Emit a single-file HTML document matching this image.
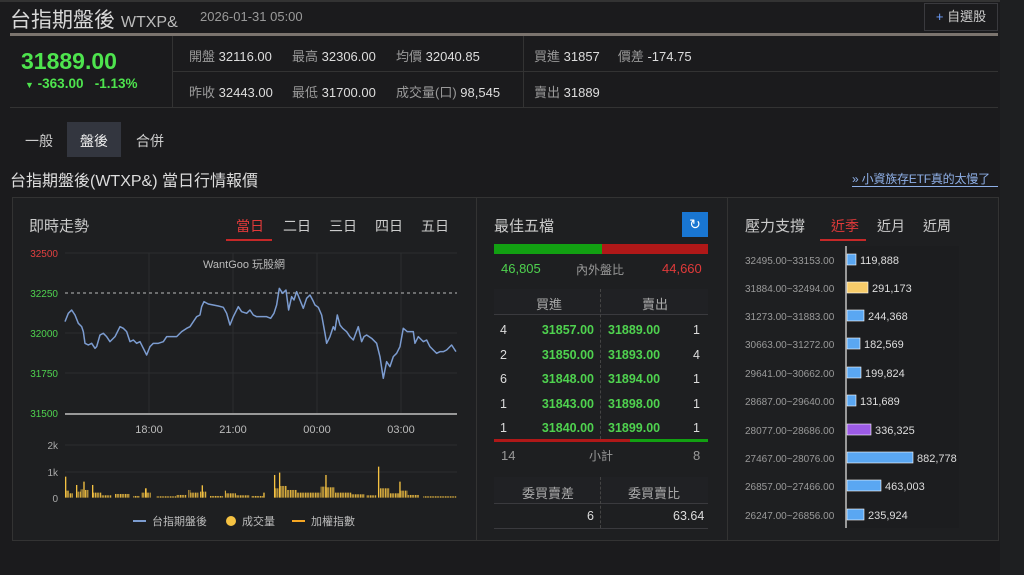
<!DOCTYPE html>
<html><head><meta charset="utf-8"><style>
*{margin:0;padding:0;box-sizing:border-box}
body{width:1024px;height:575px;background:#1b1b1d;font-family:"Liberation Sans","Noto Sans CJK TC",sans-serif;color:#ddd;position:relative;overflow:hidden}
.a{position:absolute;white-space:nowrap}
.lbl{color:#9a9a9a}
.g{color:#4fd24f}
.r{color:#e03a3a}
</style></head><body>
<div class="a" style="left:0;top:0;width:1024px;height:2px;background:#333"></div>
<div class="a" style="left:10px;top:4px;font-size:21px;color:#d8d8d8">台指期盤後 <span style="font-size:16px;color:#bbb">WTXP&amp;</span></div>
<div class="a" style="left:200px;top:9px;font-size:13px;color:#9a9a9a">2026-01-31 05:00</div>
<div class="a" style="left:924px;top:3px;width:74px;height:28px;border:1px solid #3a3a3e;font-size:13px;line-height:26px;text-align:center;color:#ccc"><span style="color:#6fa0ff">+</span> 自選股</div>
<div class="a" style="left:10px;top:33px;width:988px;height:3px;background:#7b746e"></div>

<div class="a" style="left:172px;top:36px;width:1px;height:71px;background:#333"></div>
<div class="a" style="left:523px;top:36px;width:1px;height:71px;background:#333"></div>
<div class="a" style="left:172px;top:71px;width:826px;height:1px;background:#333"></div>
<div class="a" style="left:10px;top:107px;width:988px;height:1px;background:#333"></div>
<div class="a g" style="left:21px;top:48px;font-size:23px;font-weight:bold;color:#4ee44e">31889.00</div>
<div class="a" style="left:25px;top:76px;font-size:13.5px;font-weight:bold;color:#4ee44e"><span style="font-size:9px">▼</span> -363.00 &nbsp;&nbsp;-1.13%</div>
<div class="a" style="left:189px;top:46px;font-size:13px"><span class="lbl">開盤</span> 32116.00</div>
<div class="a" style="left:292px;top:46px;font-size:13px"><span class="lbl">最高</span> 32306.00</div>
<div class="a" style="left:396px;top:46px;font-size:13px"><span class="lbl">均價</span> 32040.85</div>
<div class="a" style="left:189px;top:82px;font-size:13px"><span class="lbl">昨收</span> 32443.00</div>
<div class="a" style="left:292px;top:82px;font-size:13px"><span class="lbl">最低</span> 31700.00</div>
<div class="a" style="left:396px;top:82px;font-size:13px"><span class="lbl">成交量(口)</span> 98,545</div>
<div class="a" style="left:534px;top:46px;font-size:13px"><span class="lbl">買進</span> 31857 &nbsp;&nbsp;&nbsp; <span class="lbl">價差</span> -174.75</div>
<div class="a" style="left:534px;top:82px;font-size:13px"><span class="lbl">賣出</span> 31889</div>

<div class="a" style="left:67px;top:122px;width:54px;height:35px;background:#33363f"></div>
<div class="a" style="left:25px;top:131px;font-size:14px;color:#ccc">一般</div>
<div class="a" style="left:80px;top:131px;font-size:14px;color:#eee">盤後</div>
<div class="a" style="left:136px;top:131px;font-size:14px;color:#ccc">合併</div>
<div class="a" style="left:10px;top:167px;font-size:16px;color:#ddd">台指期盤後(WTXP&amp;) 當日行情報價</div>
<div class="a" style="left:852px;top:170px;font-size:12px;color:#8fb0e8;letter-spacing:-0.2px">» 小資族存ETF真的太慢了</div>
<div class="a" style="left:852px;top:186px;width:146px;height:1px;background:#8fb0e8"></div>

<div class="a" style="left:12px;top:197px;width:987px;height:344px;border:1px solid #333;background:#1e1f21"></div>
<div class="a" style="left:476px;top:198px;width:1px;height:342px;background:#333"></div>
<div class="a" style="left:727px;top:198px;width:1px;height:342px;background:#333"></div>
<div class="a" style="left:1000px;top:0;width:24px;height:575px;background:#1e1f21"></div>

<!-- chart panel -->
<div class="a" style="left:29px;top:215px;font-size:15px;color:#ccc">即時走勢</div>
<div class="a r" style="left:236px;top:216px;font-size:14px">當日</div>
<div class="a" style="left:226px;top:239px;width:46px;height:2px;background:#c62828"></div>
<div class="a" style="left:283px;top:216px;font-size:14px;color:#ccc">二日</div>
<div class="a" style="left:329px;top:216px;font-size:14px;color:#ccc">三日</div>
<div class="a" style="left:375px;top:216px;font-size:14px;color:#ccc">四日</div>
<div class="a" style="left:421px;top:216px;font-size:14px;color:#ccc">五日</div>
<svg class="a" style="left:0;top:0" width="476" height="575">
<defs><pattern id="st" patternUnits="userSpaceOnUse" width="5" height="10"><rect x="0" y="0" width="3" height="10" fill="#f5c242"/></pattern></defs>
<g stroke="#2c2d30" stroke-width="1">
<line x1="65" y1="253" x2="457" y2="253"/><line x1="65" y1="333" x2="457" y2="333"/><line x1="65" y1="373" x2="457" y2="373"/>
<line x1="149" y1="253" x2="149" y2="413"/><line x1="233" y1="253" x2="233" y2="413"/><line x1="317" y1="253" x2="317" y2="413"/><line x1="401" y1="253" x2="401" y2="413"/>
<line x1="65" y1="445" x2="457" y2="445"/><line x1="65" y1="472" x2="457" y2="472"/>
</g>
<line x1="65" y1="293" x2="457" y2="293" stroke="#bbb" stroke-dasharray="3,3"/>
<line x1="65" y1="414" x2="457" y2="414" stroke="#999" stroke-width="2"/>
<g font-size="10" font-family="Liberation Sans,sans-serif" text-anchor="end">
<text x="58" y="257" fill="#e04040">32500</text>
<text x="58" y="297" fill="#4fd24f">32250</text>
<text x="58" y="337" fill="#4fd24f">32000</text>
<text x="58" y="377" fill="#4fd24f">31750</text>
<text x="58" y="417" fill="#4fd24f">31500</text>
<text x="58" y="449" fill="#aaa">2k</text>
<text x="58" y="476" fill="#aaa">1k</text>
<text x="58" y="502" fill="#aaa">0</text>
</g>
<g font-size="11" fill="#bbb" text-anchor="middle" font-family="Liberation Sans,sans-serif">
<text x="149" y="433">18:00</text><text x="233" y="433">21:00</text><text x="317" y="433">00:00</text><text x="401" y="433">03:00</text>
</g>
<text x="244" y="268" font-size="11" fill="#bbb" text-anchor="middle" font-family="Liberation Sans,Noto Sans CJK TC,sans-serif">WantGoo 玩股網</text>
<g transform="translate(0,200) scale(0.3333)">
<polyline fill="none" stroke="#7c9cd0" stroke-width="4.5" stroke-linejoin="round" points="195,365 205,340 215,330 225,345 235,370 245,380 250,395 255,430 265,435 275,430 285,445 290,440 300,405 310,400 320,410 330,425 345,410 360,380 370,385 380,395 390,425 400,420 410,430 420,425 430,445 440,465 450,440 460,430 475,430 490,425 500,410 515,410 530,410 545,395 560,385 570,380 580,365 590,350 600,345 605,320 612,305 625,312 640,315 655,318 670,322 680,340 690,375 700,350 715,320 725,335 740,340 750,330 760,345 770,350 785,350 800,350 812,355 822,340 830,315 838,265 848,280 858,270 866,330 875,290 882,300 890,275 900,300 910,325 920,295 930,285 938,300 945,315 955,322 965,345 975,400 980,430 990,410 1000,380 1005,390 1012,345 1020,375 1028,385 1040,395 1050,410 1060,420 1075,380 1085,425 1092,410 1100,405 1115,415 1130,430 1140,470 1150,535 1160,485 1170,500 1180,470 1190,460 1200,440 1210,385 1222,395 1240,395 1245,430 1255,410 1270,425 1280,420 1290,440 1300,450 1310,460 1320,455 1330,455 1340,450 1355,435 1368,455"/>
<g fill="url(#st)">
<rect x="195" y="830" width="4" height="63" fill="#f5c242"/><rect x="199" y="872" width="8" height="21"/><rect x="207" y="880" width="12" height="13"/>
<rect x="228" y="855" width="4" height="38" fill="#f5c242"/><rect x="232" y="875" width="10" height="18"/><rect x="242" y="868" width="6" height="25"/><rect x="250" y="845" width="4" height="48" fill="#f5c242"/><rect x="254" y="870" width="12" height="23"/><rect x="276" y="855" width="4" height="38" fill="#f5c242"/><rect x="280" y="878" width="25" height="15"/><rect x="305" y="886" width="30" height="7"/>
<rect x="345" y="882" width="45" height="11"/><rect x="400" y="888" width="20" height="5"/><rect x="425" y="878" width="10" height="15"/><rect x="435" y="865" width="5" height="28" fill="#f5c242"/><rect x="440" y="878" width="12" height="15"/>
<rect x="470" y="889" width="60" height="4"/><rect x="530" y="885" width="30" height="8"/><rect x="565" y="870" width="6" height="23"/><rect x="571" y="878" width="25" height="15"/><rect x="605" y="856" width="4" height="37" fill="#f5c242"/><rect x="600" y="875" width="20" height="18"/>
<rect x="630" y="888" width="40" height="5"/><rect x="673" y="872" width="5" height="21"/><rect x="678" y="880" width="30" height="13"/><rect x="708" y="886" width="40" height="7"/><rect x="755" y="888" width="35" height="5"/><rect x="790" y="878" width="4" height="15" fill="#f5c242"/>
<rect x="822" y="825" width="4" height="68" fill="#f5c242"/><rect x="826" y="865" width="10" height="28"/><rect x="837" y="818" width="4" height="75" fill="#f5c242"/><rect x="841" y="858" width="20" height="35"/><rect x="861" y="870" width="30" height="23"/><rect x="891" y="878" width="70" height="15"/>
<rect x="962" y="860" width="14" height="33"/><rect x="976" y="825" width="4" height="68" fill="#f5c242"/><rect x="980" y="862" width="25" height="31"/><rect x="1005" y="878" width="50" height="15"/><rect x="1055" y="883" width="40" height="10"/>
<rect x="1100" y="886" width="30" height="7"/><rect x="1134" y="800" width="4" height="93" fill="#f5c242"/><rect x="1138" y="865" width="30" height="28"/><rect x="1168" y="880" width="30" height="13"/><rect x="1198" y="845" width="4" height="48" fill="#f5c242"/><rect x="1202" y="872" width="20" height="21"/><rect x="1222" y="885" width="35" height="8"/><rect x="1270" y="889" width="100" height="4"/>
</g>
</g>
<line x1="133" y1="521" x2="146" y2="521" stroke="#7c9cd0" stroke-width="2"/>
<circle cx="231" cy="521" r="5" fill="#f5c242"/>
<line x1="292" y1="521" x2="305" y2="521" stroke="#f5a623" stroke-width="2"/>
<g font-size="11" fill="#bbb" font-family="Liberation Sans,Noto Sans CJK TC,sans-serif">
<text x="152" y="525">台指期盤後</text><text x="242" y="525">成交量</text><text x="311" y="525">加權指數</text>
</g>
</svg>

<!-- best five -->
<div class="a" style="left:494px;top:215px;font-size:15px;color:#ccc">最佳五檔</div>
<div class="a" style="left:682px;top:212px;width:26px;height:25px;background:#1976d2;color:#fff;font-size:14px;line-height:25px;text-align:center">↻</div>
<div class="a" style="left:494px;top:244px;width:108px;height:10px;background:#12a012"></div>
<div class="a" style="left:602px;top:244px;width:106px;height:10px;background:#b01818"></div>
<div class="a" style="left:501px;top:261px;font-size:13px;color:#4fd24f">46,805</div>
<div class="a" style="left:576px;top:261px;font-size:12px;color:#999">內外盤比</div>
<div class="a" style="left:662px;top:261px;font-size:13px;color:#e03a3a">44,660</div>
<div class="a" style="left:494px;top:289px;width:214px;height:25px;background:#202124"></div>
<div class="a" style="left:494px;top:314px;width:214px;height:1px;background:#3a3a3e"></div>
<div class="a" style="left:600px;top:289px;width:0;height:150px;border-left:1px dashed #444"></div>
<div class="a" style="left:536px;top:294px;font-size:13px;color:#aaa">買進</div>
<div class="a" style="left:642px;top:294px;font-size:13px;color:#aaa">賣出</div>
<div style="position:absolute;left:494px;top:318px;width:214px;font-size:12.5px;line-height:24.6px;font-weight:bold">
<div style="position:relative;height:24.6px"><span class="a" style="left:6px;font-weight:normal">4</span><span class="a g" style="right:114px">31857.00</span><span class="a g" style="left:114px">31889.00</span><span class="a" style="right:8px;font-weight:normal">1</span></div>
<div style="position:relative;height:24.6px"><span class="a" style="left:6px;font-weight:normal">2</span><span class="a g" style="right:114px">31850.00</span><span class="a g" style="left:114px">31893.00</span><span class="a" style="right:8px;font-weight:normal">4</span></div>
<div style="position:relative;height:24.6px"><span class="a" style="left:6px;font-weight:normal">6</span><span class="a g" style="right:114px">31848.00</span><span class="a g" style="left:114px">31894.00</span><span class="a" style="right:8px;font-weight:normal">1</span></div>
<div style="position:relative;height:24.6px"><span class="a" style="left:6px;font-weight:normal">1</span><span class="a g" style="right:114px">31843.00</span><span class="a g" style="left:114px">31898.00</span><span class="a" style="right:8px;font-weight:normal">1</span></div>
<div style="position:relative;height:24.6px"><span class="a" style="left:6px;font-weight:normal">1</span><span class="a g" style="right:114px">31840.00</span><span class="a g" style="left:114px">31899.00</span><span class="a" style="right:8px;font-weight:normal">1</span></div>
</div>
<div class="a" style="left:494px;top:439px;width:136px;height:3px;background:#b01818"></div>
<div class="a" style="left:630px;top:439px;width:78px;height:3px;background:#12a012"></div>
<div class="a" style="left:501px;top:448px;font-size:13px;color:#999">14</div>
<div class="a" style="left:589px;top:447px;font-size:12px;color:#999">小計</div>
<div class="a" style="left:693px;top:448px;font-size:13px;color:#999">8</div>
<div class="a" style="left:494px;top:477px;width:214px;height:26px;background:#202124"></div>
<div class="a" style="left:494px;top:503px;width:214px;height:1px;background:#3a3a3e"></div>
<div class="a" style="left:494px;top:528px;width:214px;height:1px;background:#3a3a3e"></div>
<div class="a" style="left:600px;top:477px;width:0;height:51px;border-left:1px dashed #444"></div>
<div class="a" style="left:522px;top:483px;font-size:13px;color:#aaa">委買賣差</div>
<div class="a" style="left:628px;top:483px;font-size:13px;color:#aaa">委買賣比</div>
<div class="a" style="left:587px;top:509px;font-size:12.5px">6</div>
<div class="a" style="left:673px;top:509px;font-size:12.5px">63.64</div>

<!-- pressure -->
<div class="a" style="left:745px;top:215px;font-size:15px;color:#ccc">壓力支撐</div>
<div class="a r" style="left:831px;top:216px;font-size:14px">近季</div>
<div class="a" style="left:820px;top:239px;width:46px;height:2px;background:#c62828"></div>
<div class="a" style="left:877px;top:216px;font-size:14px;color:#ccc">近月</div>
<div class="a" style="left:923px;top:216px;font-size:14px;color:#ccc">近周</div>
<div class="a" style="left:845px;top:246px;width:114px;height:282px;background:#1c1d1f"></div>
<div class="a" style="left:845px;top:246px;width:2px;height:282px;background:#999"></div>
<svg class="a" style="left:728px;top:0" width="270" height="575" font-family="Liberation Sans,sans-serif">
<g font-size="10" fill="#9a9a9a">
<text x="17" y="264">32495.00~33153.00</text><text x="17" y="292">31884.00~32494.00</text><text x="17" y="320">31273.00~31883.00</text><text x="17" y="348">30663.00~31272.00</text><text x="17" y="377">29641.00~30662.00</text><text x="17" y="405">28687.00~29640.00</text><text x="17" y="434">28077.00~28686.00</text><text x="17" y="462">27467.00~28076.00</text><text x="17" y="490">26857.00~27466.00</text><text x="17" y="519">26247.00~26856.00</text>
</g>
<g stroke="#fff" stroke-width="0.6">
<rect x="119" y="254" width="9" height="11" fill="#5aa7f2"/>
<rect x="119" y="282" width="21" height="11" fill="#f7cc6a"/>
<rect x="119" y="310" width="17" height="11" fill="#5aa7f2"/>
<rect x="119" y="338" width="13" height="11" fill="#5aa7f2"/>
<rect x="119" y="367" width="14" height="11" fill="#5aa7f2"/>
<rect x="119" y="395" width="9" height="11" fill="#5aa7f2"/>
<rect x="119" y="424" width="24" height="11" fill="#9c5be6"/>
<rect x="119" y="452" width="66" height="11" fill="#5aa7f2"/>
<rect x="119" y="480" width="34" height="11" fill="#5aa7f2"/>
<rect x="119" y="509" width="17" height="11" fill="#5aa7f2"/>
</g>
<g font-size="11" fill="#ddd">
<text x="132" y="264">119,888</text><text x="144" y="292">291,173</text><text x="140" y="320">244,368</text><text x="136" y="348">182,569</text><text x="137" y="377">199,824</text><text x="132" y="405">131,689</text><text x="147" y="434">336,325</text><text x="189" y="462">882,778</text><text x="157" y="490">463,003</text><text x="140" y="519">235,924</text>
</g>
</svg>
</body></html>
